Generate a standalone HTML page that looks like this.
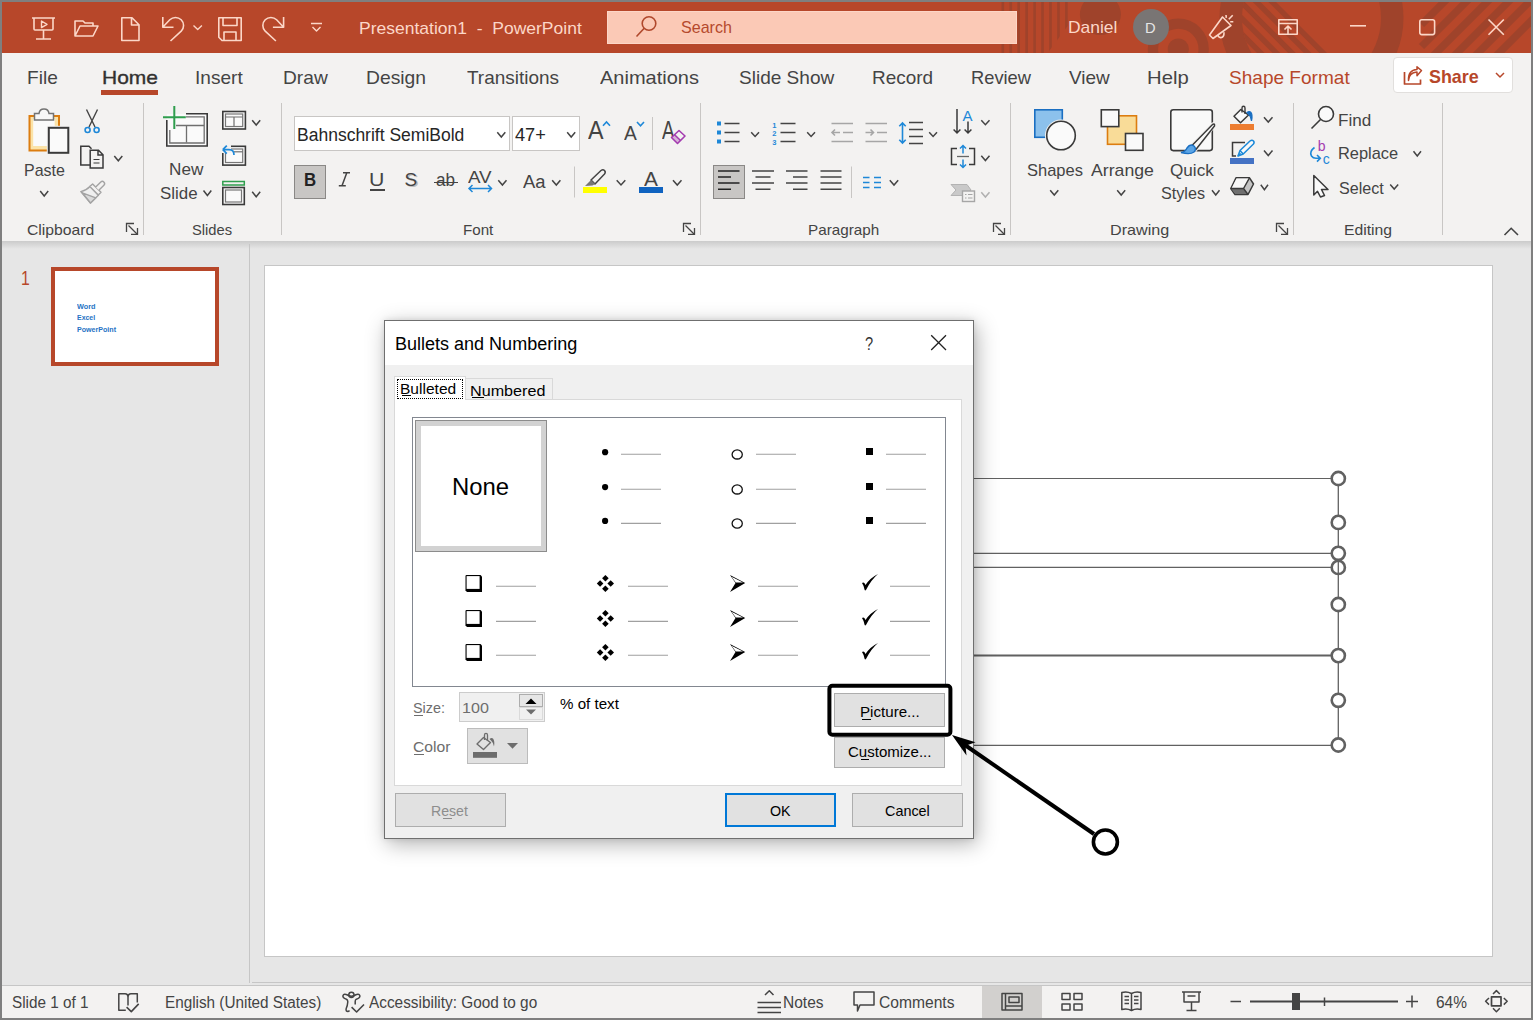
<!DOCTYPE html>
<html><head><meta charset="utf-8"><style>
html,body{margin:0;padding:0;}
body{width:1533px;height:1020px;overflow:hidden;background:#7f7f7f;font-family:"Liberation Sans", sans-serif;position:relative;}
.t{position:absolute;white-space:nowrap;}
.r{position:absolute;box-sizing:border-box;}
.s{position:absolute;overflow:visible;}
</style></head><body>
<div class="r" style="left:2px;top:2px;width:1529px;height:51px;background:#b7472a;"></div>
<div class="r" style="left:2px;top:53px;width:1529px;height:188px;background:#f3f2f1;"></div>
<div class="r" style="left:2px;top:241px;width:1529px;height:744px;background:#e6e6e6;"></div>
<div class="r" style="left:2px;top:241px;width:1529px;height:8px;background:linear-gradient(#cbcbcb,#e6e6e6);"></div>
<div class="r" style="left:2px;top:985px;width:1529px;height:1px;background:#c6c6c6;"></div>
<div class="r" style="left:2px;top:986px;width:1529px;height:32px;background:#f3f2f1;"></div>
<svg class="s" style="left:0px;top:0px" width="1533" height="1020" viewBox="0 0 1533 1020"><defs>
<clipPath id="tbclip"><rect x="2" y="2" width="1529" height="51"/></clipPath>
<clipPath id="stripeclip"><polygon points="990,2 1072,2 1072,20 1044,58 990,58"/></clipPath>
<clipPath id="ringin"><circle cx="1311.5" cy="18" r="69.5"/></clipPath>
</defs>
<g clip-path="url(#tbclip)" fill="#9f432b">
<g clip-path="url(#stripeclip)"><rect x="1001.50" y="2" width="2.6" height="56"/><rect x="1009.45" y="2" width="2.6" height="56"/><rect x="1017.40" y="2" width="2.6" height="56"/><rect x="1025.35" y="2" width="2.6" height="56"/><rect x="1033.30" y="2" width="2.6" height="56"/><rect x="1041.25" y="2" width="2.6" height="56"/><rect x="1049.20" y="2" width="2.6" height="56"/><rect x="1057.15" y="2" width="2.6" height="56"/><rect x="1065.10" y="2" width="2.6" height="56"/></g><circle cx="1100.4" cy="14.5" r="20.5"/><circle cx="1178.3" cy="49" r="30.5"/><circle cx="1178.3" cy="49" r="20.2" fill="#b7472a"/><circle cx="1178.3" cy="49" r="10.6"/><circle cx="1311.5" cy="18" r="92"/><circle cx="1311.5" cy="18" r="69.5" fill="#b7472a"/><g clip-path="url(#ringin)"><polygon points="1268.4,2 1276.0,2 1327.0,53 1319.4,53"/><polygon points="1252.8,2 1260.4,2 1311.4,53 1303.8,53"/><polygon points="1237.2,2 1244.8,2 1295.8,53 1288.2,53"/><polygon points="1221.6,2 1229.2,2 1280.2,53 1272.6,53"/><polygon points="1206.0,2 1213.6,2 1264.6,53 1257.0,53"/><polygon points="1190.4,2 1198.0,2 1249.0,53 1241.4,53"/><polygon points="1174.8,2 1182.4,2 1233.4,53 1225.8,53"/></g><path d="M1421.5 24.5 L1466 -20" stroke="#9f432b" stroke-width="7.4" fill="none"/><path d="M1421.5 46.5 L1488 -20" stroke="#9f432b" stroke-width="7.4" fill="none"/><path d="M1421.5 67.5 L1509 -20" stroke="#9f432b" stroke-width="7.4" fill="none"/><path d="M1421.5 88.5 L1530 -20" stroke="#9f432b" stroke-width="7.4" fill="none"/><path d="M1421.5 109.5 L1551 -20" stroke="#9f432b" stroke-width="7.4" fill="none"/><path d="M1421.5 130.5 L1572 -20" stroke="#9f432b" stroke-width="7.4" fill="none"/></g></svg>
<svg class="s" style="left:0px;top:0px" width="1533" height="1020" viewBox="0 0 1533 1020"><g fill="none" stroke="#fcd7c8" stroke-width="1.6" stroke-linejoin="round" stroke-linecap="butt"><path d="M32 18 H55 M34 18 V29 Q34 30 35 30 H52 Q53 30 53 29 V18 M43.5 30 V39 M36 39 H51"/><path d="M41.5 21 L47 24.3 L41.5 27.6 Z" stroke-width="1.4"/><path d="M75 36 V21 H83 L85 23 H93 V26 M75 36 L80 26 H98 L93 36 Z"/><path d="M121.8 17.8 H132 L139 24.8 V40.5 H121.8 Z M131.5 17.8 V25 H139"/><path d="M162.8 17 V27.2 H173.5 M163.2 26.8 L169.8 19.8 A8 8 0 0 1 181.2 31.2 L170.5 41"/><path d="M193.5 25.5 L197.7 29.5 L201.9 25.5" stroke-width="1.4"/><path d="M218.8 17.8 H241.2 V40.5 H222 L218.8 37.3 Z M223 17.8 V25.5 H237 V17.8 M224 40.5 V32 H236 V40.5"/><path d="M283.6 17 V27.2 H272.9 M283.2 26.8 L276.6 19.8 A8 8 0 0 0 265.2 31.2 L275.9 41"/><path d="M311 23.5 H322 M312.5 27 L316.5 31 L320.5 27" stroke-width="1.4"/><path d="M1209.5 35 L1222.5 17 L1231 25.5 L1213 38.5 Z M1217.8 34.5 Q1218.3 37.8 1220.8 37.6 Q1224.3 37.3 1224 32.2 M1226 15 L1226.3 17.8 M1228.8 19.2 L1232.7 15.3 M1230.2 21.8 H1233.3" /><path d="M1278.8 19.8 H1297.2 V34.2 H1278.8 Z M1278.8 23.5 H1297.2 M1288 33.5 V26.5 M1284.5 29.5 L1288 26 L1291.5 29.5"/><path d="M1350 25.8 H1366"/><rect x="1419.8" y="19.8" width="14.8" height="14.8" rx="2"/><path d="M1488.5 19.5 L1503.8 34.8 M1503.8 19.5 L1488.5 34.8"/></g></svg>
<div class="t" id="t0" style="left:358.97px;top:20.21px;font-size:17px;line-height:17px;color:#fcd7c8;transform:scaleX(1.0294);transform-origin:0 0;">Presentation1&nbsp; -&nbsp; PowerPoint</div>
<div class="r" style="left:607px;top:11px;width:410px;height:33px;background:#fbc9b6;border:1px solid #fdd6c7;"></div>
<svg class="s" style="left:0px;top:0px" width="1533" height="1020" viewBox="0 0 1533 1020"><g fill="none" stroke="#b0482c" stroke-width="1.6"><circle cx="649" cy="23.5" r="6.8"/><path d="M644.2 28.3 L636.5 36.5"/></g></svg>
<div class="t" id="t1" style="left:680.50px;top:19.41px;font-size:17px;line-height:17px;color:#b5492d;transform:scaleX(0.9455);transform-origin:0 0;">Search</div>
<div class="t" id="t2" style="left:1067.97px;top:19.41px;font-size:17px;line-height:17px;color:#fcd7c8;transform:scaleX(1.0255);transform-origin:0 0;">Daniel</div>
<svg class="s" style="left:0px;top:0px" width="1533" height="1020" viewBox="0 0 1533 1020"><circle cx="1151" cy="27" r="18" fill="#797574"/></svg>
<div class="t" id="t3" style="left:1144.82px;top:20.20px;font-size:15px;line-height:15px;color:#e6e6e6;transform:scaleX(0.9800);transform-origin:0 0;">D</div>
<div class="t" id="t4" style="left:26.79px;top:67.92px;font-size:19px;line-height:19px;color:#444444;transform:scaleX(1.0052);transform-origin:0 0;">File</div>
<div class="t" id="t5" style="left:101.90px;top:67.92px;font-size:19px;line-height:19px;color:#323130;transform:scaleX(1.1035);transform-origin:0 0;-webkit-text-stroke:0.35px #323130;">Home</div>
<div class="t" id="t6" style="left:195.00px;top:67.92px;font-size:19px;line-height:19px;color:#444444;transform:scaleX(1.0034);transform-origin:0 0;">Insert</div>
<div class="t" id="t7" style="left:282.99px;top:67.92px;font-size:19px;line-height:19px;color:#444444;transform:scaleX(1.0088);transform-origin:0 0;">Draw</div>
<div class="t" id="t8" style="left:365.59px;top:67.92px;font-size:19px;line-height:19px;color:#444444;transform:scaleX(1.0143);transform-origin:0 0;">Design</div>
<div class="t" id="t9" style="left:466.50px;top:67.92px;font-size:19px;line-height:19px;color:#444444;transform:scaleX(0.9976);transform-origin:0 0;">Transitions</div>
<div class="t" id="t10" style="left:599.60px;top:67.92px;font-size:19px;line-height:19px;color:#444444;transform:scaleX(1.0525);transform-origin:0 0;">Animations</div>
<div class="t" id="t11" style="left:738.50px;top:67.92px;font-size:19px;line-height:19px;color:#444444;transform:scaleX(1.0017);transform-origin:0 0;">Slide Show</div>
<div class="t" id="t12" style="left:872.00px;top:67.92px;font-size:19px;line-height:19px;color:#444444;transform:scaleX(0.9969);transform-origin:0 0;">Record</div>
<div class="t" id="t13" style="left:970.74px;top:67.92px;font-size:19px;line-height:19px;color:#444444;transform:scaleX(0.9630);transform-origin:0 0;">Review</div>
<div class="t" id="t14" style="left:1069.00px;top:67.92px;font-size:19px;line-height:19px;color:#444444;transform:scaleX(0.9971);transform-origin:0 0;">View</div>
<div class="t" id="t15" style="left:1147.43px;top:67.92px;font-size:19px;line-height:19px;color:#444444;transform:scaleX(1.0664);transform-origin:0 0;">Help</div>
<div class="t" id="t16" style="left:1229.40px;top:67.92px;font-size:19px;line-height:19px;color:#b7472a;transform:scaleX(1.0024);transform-origin:0 0;">Shape Format</div>
<div class="r" style="left:101px;top:90px;width:57px;height:5px;background:#b7472a;"></div>
<div class="r" style="left:1393px;top:57px;width:119.5px;height:36px;background:#ffffff;border:1px solid #e1dfdd;border-radius:4px;"></div>
<div class="t" id="t17" style="left:1428.80px;top:66.72px;font-size:19px;line-height:19px;color:#b7472a;transform:scaleX(0.9418);transform-origin:0 0;font-weight:700;">Share</div>
<svg class="s" style="left:0px;top:0px" width="1533" height="1020" viewBox="0 0 1533 1020"><g fill="none" stroke="#b7472a" stroke-width="1.7" stroke-linejoin="round"><path d="M1404.5 72 V84 H1420.5 V79.5"/><path d="M1408.5 80.5 Q1409 72.5 1417 72 V75.8 L1421.5 70.5 L1417 66.8 V69.5 Q1408 70 1408.5 80.5 Z" stroke-width="1.5"/><path d="M1496 73 L1500 77 L1504 73" stroke-width="1.5"/></g></svg>
<div class="r" style="left:143.0px;top:103px;width:1px;height:132px;background:#c8c6c4;"></div>
<div class="r" style="left:281.0px;top:103px;width:1px;height:132px;background:#c8c6c4;"></div>
<div class="r" style="left:700.0px;top:103px;width:1px;height:132px;background:#c8c6c4;"></div>
<div class="r" style="left:1010.0px;top:103px;width:1px;height:132px;background:#c8c6c4;"></div>
<div class="r" style="left:1293.0px;top:103px;width:1px;height:132px;background:#c8c6c4;"></div>
<div class="r" style="left:1442.0px;top:103px;width:1px;height:132px;background:#c8c6c4;"></div>
<div class="t" id="t18" style="left:26.50px;top:221.60px;font-size:15px;line-height:15px;color:#444444;transform:scaleX(1.0491);transform-origin:0 0;">Clipboard</div>
<div class="t" id="t19" style="left:192.40px;top:221.60px;font-size:15px;line-height:15px;color:#444444;transform:scaleX(0.9813);transform-origin:0 0;">Slides</div>
<div class="t" id="t20" style="left:462.79px;top:221.60px;font-size:15px;line-height:15px;color:#444444;transform:scaleX(1.0085);transform-origin:0 0;">Font</div>
<div class="t" id="t21" style="left:807.78px;top:221.60px;font-size:15px;line-height:15px;color:#444444;transform:scaleX(1.0159);transform-origin:0 0;">Paragraph</div>
<div class="t" id="t22" style="left:1109.72px;top:221.60px;font-size:15px;line-height:15px;color:#444444;transform:scaleX(1.0768);transform-origin:0 0;">Drawing</div>
<div class="t" id="t23" style="left:1343.65px;top:221.60px;font-size:15px;line-height:15px;color:#444444;transform:scaleX(1.0489);transform-origin:0 0;">Editing</div>
<div class="t" id="t24" style="left:24.36px;top:162.31px;font-size:17px;line-height:17px;color:#444444;transform:scaleX(0.9401);transform-origin:0 0;">Paste</div>
<div class="t" id="t25" style="left:168.79px;top:161.41px;font-size:17px;line-height:17px;color:#444444;transform:scaleX(1.0080);transform-origin:0 0;">New</div>
<div class="t" id="t26" style="left:159.80px;top:185.31px;font-size:17px;line-height:17px;color:#444444;transform:scaleX(0.9934);transform-origin:0 0;">Slide</div>
<div class="t" id="t27" style="left:1026.50px;top:161.61px;font-size:17px;line-height:17px;color:#444444;transform:scaleX(0.9710);transform-origin:0 0;">Shapes</div>
<div class="t" id="t28" style="left:1090.60px;top:161.61px;font-size:17px;line-height:17px;color:#444444;transform:scaleX(1.0396);transform-origin:0 0;">Arrange</div>
<div class="t" id="t29" style="left:1169.50px;top:161.61px;font-size:17px;line-height:17px;color:#444444;transform:scaleX(1.0079);transform-origin:0 0;">Quick</div>
<div class="t" id="t30" style="left:1160.50px;top:185.21px;font-size:17px;line-height:17px;color:#444444;transform:scaleX(0.9499);transform-origin:0 0;">Styles</div>
<div class="t" id="t31" style="left:1337.99px;top:111.61px;font-size:17px;line-height:17px;color:#444444;transform:scaleX(1.0058);transform-origin:0 0;">Find</div>
<div class="t" id="t32" style="left:1338.03px;top:145.41px;font-size:17px;line-height:17px;color:#444444;transform:scaleX(0.9652);transform-origin:0 0;">Replace</div>
<div class="t" id="t33" style="left:1338.80px;top:179.51px;font-size:17px;line-height:17px;color:#444444;transform:scaleX(0.9469);transform-origin:0 0;">Select</div>
<div class="r" style="left:294px;top:116px;width:216px;height:35px;background:#fff;border:1px solid #c8c6c4;"></div>
<div class="r" style="left:512px;top:116px;width:68px;height:35px;background:#fff;border:1px solid #c8c6c4;"></div>
<div class="t" id="t34" style="left:296.63px;top:125.76px;font-size:18px;line-height:18px;color:#262626;transform:scaleX(0.9725);transform-origin:0 0;">Bahnschrift SemiBold</div>
<div class="t" id="t35" style="left:515.30px;top:125.76px;font-size:18px;line-height:18px;color:#262626;transform:scaleX(1.0093);transform-origin:0 0;">47+</div>
<div class="r" style="left:294px;top:165px;width:32px;height:34px;background:#c8c6c4;border:1px solid #8a8886;"></div>
<div class="r" style="left:713px;top:165px;width:32px;height:34px;background:#c8c6c4;border:1px solid #8a8886;"></div>
<div class="t" id="t36" style="left:303.67px;top:170.76px;font-size:18px;line-height:18px;color:#222;transform:scaleX(0.9333);transform-origin:0 0;font-weight:700;">B</div>
<div class="t" id="t37" style="left:522.80px;top:173.26px;font-size:18px;line-height:18px;color:#444444;transform:scaleX(1.0215);transform-origin:0 0;">Aa</div>
<svg class="s" style="left:0px;top:0px" width="1533" height="1020" viewBox="0 0 1533 1020"><rect x="29.5" y="116" width="29.5" height="34.5" fill="#fbe3a8" stroke="#dc7d10" stroke-width="2"/><rect x="33.2" y="119" width="21.5" height="27" fill="#fafafa"/><path d="M34.5 120 V113.5 H39 Q39.5 109 44 109 Q48.5 109 49 113.5 H53.5 V120 Z" fill="#f7f7f7" stroke="#737373" stroke-width="1.5"/><rect x="46.8" y="125.8" width="23.5" height="29" fill="#f3f2f1"/><rect x="48.8" y="127.8" width="19.5" height="25" fill="#fafafa" stroke="#3a3a3a" stroke-width="2"/><path d="M40.2 191 L44.2 196 L48.2 191" fill="none" stroke="#444444" stroke-width="1.5"/><path d="M86.5 109.5 L95 127 M97.5 109.5 L89 127" stroke="#444444" stroke-width="1.4" fill="none"/><circle cx="87.6" cy="130" r="2.5" fill="none" stroke="#1e88d8" stroke-width="1.6"/><circle cx="96.6" cy="130" r="2.5" fill="none" stroke="#1e88d8" stroke-width="1.6"/><g fill="none" stroke="#3a3a3a" stroke-width="1.5" stroke-linejoin="miter"><path d="M90 165 H80.8 V146.2 H89 L91.5 148.7"/><path d="M90.2 150.2 H98.5 L103 154.7 V168 H90.2 Z M98 150.2 V155 H103"/><path d="M93.5 159.5 H99.5 M93.5 163 H99.5" stroke-width="1.2"/></g><path d="M114.3 156 L118.3 160.8 L122.3 156" fill="none" stroke="#444444" stroke-width="1.5"/><g stroke="#a3a3a3" stroke-width="1.4" stroke-linejoin="round"><path d="M90.2 186.3 Q86.5 190.3 80.8 191.6 L90.5 203 L98.4 195.3 Z" fill="#efefef"/><path d="M82.3 192.8 L95.8 197.8 L90.5 203 Z" fill="#dadada"/><path d="M89.8 186.6 L92.6 184 L101 192.3 L98.3 195.1 Z" fill="#f3f2f1"/><path d="M95.7 187 L100.8 182 Q102.4 180.6 104 182.2 Q105.4 183.8 103.9 185.3 L98.8 190.3" fill="#f3f2f1"/></g><g fill="none" stroke="#444444" stroke-width="1.3"><path d="M126.5 232 V223.5 H134"/><path d="M128.5 225.5 L137 234"/><path d="M131 234.3 H137.5 V228"/></g><rect x="167" y="114" width="40" height="32" fill="#fafafa"/><g fill="none" stroke="#3a3a3a" stroke-width="1.6"><path d="M186 113.8 H207.2 V146 H166.8 V120"/></g><g fill="none" stroke="#6f6f6f" stroke-width="1.3"><path d="M186 116.8 H204.2 V143 H169.8 V130"/><path d="M176 125.5 H204 M186.5 125.5 V142.5"/></g><path d="M163 117.3 H185.8 M174.3 106 V129" stroke="#2f9e4e" stroke-width="2"/><path d="M203.5 190.5 L207.4 195.5 L211.3 190.5" fill="none" stroke="#444444" stroke-width="1.5"/><g fill="none"><rect x="222.8" y="111.5" width="22.6" height="17.5" fill="#fafafa" stroke="#3a3a3a" stroke-width="1.6"/><rect x="225.5" y="114" width="17.2" height="12.5" stroke="#777" stroke-width="1.2"/><path d="M225.5 117 H242.7 M234 117 V126.5" stroke="#6f6f6f" stroke-width="1.2"/></g><path d="M252.2 120.2 L256.2 125 L260.2 120.2" fill="none" stroke="#444444" stroke-width="1.5"/><g fill="none"><rect x="222.8" y="146.3" width="22.6" height="18.8" fill="#fafafa" stroke="#3a3a3a" stroke-width="1.6"/><rect x="225.5" y="149" width="17.2" height="13.5" stroke="#777" stroke-width="1.2"/></g><rect x="221" y="144" width="10" height="9" fill="#f3f2f1"/><path d="M234 151.8 H242.7" stroke="#6f6f6f" stroke-width="1.2"/><path d="M222.8 149.7 L226.8 145.7 M222.8 149.7 L226.8 153.7 M222.8 149.7 H229 Q234 149.7 234 155" fill="none" stroke="#1e88d8" stroke-width="1.7"/><rect x="222.8" y="181.5" width="21.5" height="3.5" fill="#f3f2f1" stroke="#2f9e4e" stroke-width="1.5"/><g fill="none"><rect x="222.8" y="187.5" width="21.5" height="17" fill="#fafafa" stroke="#3a3a3a" stroke-width="1.6"/><rect x="225.5" y="190" width="16" height="12" stroke="#777" stroke-width="1.2"/></g><path d="M252.2 191.7 L256.2 196.7 L260.2 191.7" fill="none" stroke="#444444" stroke-width="1.5"/><path d="M497.3 132.3 L501.3 137 L505.3 132.3" fill="none" stroke="#444444" stroke-width="1.5"/><path d="M567.2 132.3 L571.2 137 L575.2 132.3" fill="none" stroke="#444444" stroke-width="1.5"/></svg>
<svg class="s" style="left:0px;top:0px" width="1533" height="1020" viewBox="0 0 1533 1020"><path d="M343 172.8 H350 M338.8 185.8 H345.8 M346.8 172.8 L342 185.8" fill="none" stroke="#444" stroke-width="1.5"/></svg>
<div class="t" id="t38" style="left:369.32px;top:170.76px;font-size:18px;line-height:18px;color:#444444;transform:scaleX(1.1818);transform-origin:0 0;">U</div>
<div class="r" style="left:370px;top:189px;width:14.5px;height:1.5px;background:#444444;"></div>
<div class="t" id="t39" style="left:406.00px;top:170.92px;font-size:19px;line-height:19px;color:#bdbdbd;transform:scaleX(1.0000);transform-origin:0 0;">S</div>
<div class="t" id="t40" style="left:404.50px;top:169.92px;font-size:19px;line-height:19px;color:#444444;transform:scaleX(1.0000);transform-origin:0 0;">S</div>
<div class="t" id="t41" style="left:436.00px;top:170.76px;font-size:18px;line-height:18px;color:#444444;transform:scaleX(0.9495);transform-origin:0 0;">ab</div>
<div class="r" style="left:433.5px;top:181.5px;width:24.5px;height:1.4px;background:#444444;"></div>
<div class="t" id="t42" style="left:468.00px;top:170.46px;font-size:16px;line-height:16px;color:#444444;transform:scaleX(1.1716);transform-origin:0 0;">AV</div>
<div class="t" id="t43" style="left:644.30px;top:168.22px;font-size:21px;line-height:21px;color:#444444;transform:scaleX(0.9929);transform-origin:0 0;">A</div>
<div class="t" id="t44" style="left:587.70px;top:117.29px;font-size:26px;line-height:26px;color:#444444;transform:scaleX(0.8944);transform-origin:0 0;">A</div>
<div class="t" id="t45" style="left:624.00px;top:121.52px;font-size:21px;line-height:21px;color:#444444;transform:scaleX(0.9143);transform-origin:0 0;">A</div>
<div class="t" id="t46" style="left:661.50px;top:117.29px;font-size:26px;line-height:26px;color:#444444;transform:scaleX(0.7222);transform-origin:0 0;clip-path:inset(0 0 0 0);">A</div>
<svg class="s" style="left:0px;top:0px" width="1533" height="1020" viewBox="0 0 1533 1020"><g fill="none" stroke="#1e88d8" stroke-width="1.5"><path d="M469 188.5 H491.5 M472.5 185 L469 188.5 L472.5 192 M488 185 L491.5 188.5 L488 192"/></g><path d="M498.3 180.2 L502.4 185 L506.5 180.2" fill="none" stroke="#444444" stroke-width="1.5"/><path d="M552.2 180.2 L556.3 185 L560.4 180.2" fill="none" stroke="#444444" stroke-width="1.5"/><path d="M574.5 166.5 V197.5" stroke="#c8c6c4" stroke-width="1"/><path d="M591 180 L601 170.5 Q603 169 604.5 170.5 Q606 172 604.5 174 L595 184 Z" fill="#f3f2f1" stroke="#444" stroke-width="1.5" stroke-linejoin="round"/><path d="M591 180 L595 184 L592.5 185.5 L585 186 Z" fill="#777"/><rect x="583" y="187" width="24" height="6" fill="#ffff00"/><path d="M616.7 180.2 L621.0 185 L625.3 180.2" fill="none" stroke="#444444" stroke-width="1.5"/><rect x="639" y="187" width="24" height="6" fill="#0f63c0"/><path d="M673 180.2 L677.25 185 L681.5 180.2" fill="none" stroke="#444444" stroke-width="1.5"/><path d="M603 125.8 L606.5 122 L610 125.8" fill="none" stroke="#1e88d8" stroke-width="1.6"/><path d="M637 122 L640.5 125.8 L644 122" fill="none" stroke="#1e88d8" stroke-width="1.6"/><path d="M652.5 117 V150" stroke="#c8c6c4" stroke-width="1"/><path d="M671.5 137.5 L679 130.5 L685 136 L677.5 143.5 Z" fill="#f3f2f1" stroke="#a43cb0" stroke-width="1.6" stroke-linejoin="round"/><path d="M674.5 134.8 L680.5 140.5" stroke="#a43cb0" stroke-width="1.4"/><path d="M671.5 137.5 L675 134 L680.5 139.5 L677.5 143.5 Z" fill="#a43cb0" opacity="0.35"/><g fill="none" stroke="#444444" stroke-width="1.3"><path d="M683.5 232 V223.5 H691"/><path d="M685.5 225.5 L694 234"/><path d="M688 234.3 H694.5 V228"/></g></svg>
<svg class="s" style="left:0px;top:0px" width="1533" height="1020" viewBox="0 0 1533 1020"><g stroke="#444444" stroke-width="1.6" fill="none"><path d="M724.5 123.5 H739.5 M724.5 132.5 H739.5 M724.5 141.5 H739.5"/><path d="M780.5 123.5 H795.5 M780.5 132.5 H795.5 M780.5 141.5 H795.5"/><path d="M909 122.5 H923 M909 129.5 H923 M909 136.5 H923 M909 143.5 H923"/></g><rect x="717" y="121.5" width="4" height="4" fill="#1e88d8"/><rect x="717" y="130.5" width="4" height="4" fill="#1e88d8"/><rect x="717" y="139.5" width="4" height="4" fill="#1e88d8"/><path d="M751.2 132.2 L755.1 136.5 L759 132.2" fill="none" stroke="#444444" stroke-width="1.5"/><path d="M807.2 132.2 L811.1 136.5 L815 132.2" fill="none" stroke="#444444" stroke-width="1.5"/><path d="M929.2 132.2 L933.1 136.5 L937 132.2" fill="none" stroke="#444444" stroke-width="1.5"/><text x="772.3" y="127.5" font-size="7.5" font-weight="700" fill="#1e88d8" font-family="Liberation Sans">1</text><text x="772.3" y="136.3" font-size="7.5" font-weight="700" fill="#1e88d8" font-family="Liberation Sans">2</text><text x="772.3" y="145" font-size="7.5" font-weight="700" fill="#1e88d8" font-family="Liberation Sans">3</text><g stroke="#a6a6a6" stroke-width="1.6" fill="none"><path d="M831.5 123.5 H853 M843 132.5 H853 M831.5 141.5 H853 M832.5 132.5 H840 M835 129.5 L832 132.5 L835 135.5"/><path d="M865.5 123.5 H887 M877 132.5 H887 M865.5 141.5 H887 M865.5 132.5 H873.5 M870.5 129.5 L873.5 132.5 L870.5 135.5"/></g><g stroke="#1e88d8" stroke-width="1.6" fill="none"><path d="M902.5 123 V143 M899.3 126.3 L902.5 123 L905.7 126.3 M899.3 139.7 L902.5 143 L905.7 139.7"/></g><path d="M957 109 V133 M953.6 129.5 L957 133 L960.4 129.5 M968 121.5 V133 M964.6 129.5 L968 133 L971.4 129.5" stroke="#3a3a3a" stroke-width="1.5" fill="none"/><text x="962.6" y="121.3" font-size="15" fill="#1e88d8" font-family="Liberation Sans">A</text><path d="M981.3 120.3 L985.4 124.7 L989.5 120.3" fill="none" stroke="#444444" stroke-width="1.5"/><path d="M957 148.5 H951.5 V164.5 H957 M969 148.5 H974.5 V164.5 H969" stroke="#3a3a3a" stroke-width="1.5" fill="none"/><path d="M957 156.5 H969" stroke="#666" stroke-width="1.3"/><path d="M963 145.5 V153.5 M960 148.5 L963 145.5 L966 148.5 M963 159.5 V167.5 M960 164.5 L963 167.5 L966 164.5" stroke="#1e88d8" stroke-width="1.5" fill="none"/><path d="M981.3 155.8 L985.4 160.5 L989.5 155.8" fill="none" stroke="#444444" stroke-width="1.5"/><path d="M951 184.5 H967 L971 190 L963 195.5 H951 L956 190 Z" fill="#c9c9c9" stroke="#b3b3b3" stroke-width="1"/><rect x="962.5" y="191" width="12" height="10.5" fill="#f3f2f1" stroke="#a6a6a6" stroke-width="1.4"/><path d="M965 194.5 H966.5 M968 194.5 H972.5 M965 198 H966.5 M968 198 H972.5" stroke="#a6a6a6" stroke-width="1.1"/><path d="M981.3 192.3 L985.4 197 L989.5 192.3" fill="none" stroke="#b0b0b0" stroke-width="1.5"/><g stroke="#222" stroke-width="1.6" fill="none"><path d="M718 171 H739.5 M718 177 H731 M718 183 H739.5 M718 189.3 H731"/></g><g stroke="#444444" stroke-width="1.6" fill="none"><path d="M752 171 H774 M755.5 177 H770.5 M752 183 H774 M755.5 189.3 H770.5"/><path d="M786 171 H807.5 M793 177 H807.5 M786 183 H807.5 M793 189.3 H807.5"/><path d="M820.5 171 H841.5 M820.5 177 H841.5 M820.5 183 H841.5 M820.5 189.3 H841.5"/></g><path d="M851.5 166.5 V198" stroke="#c8c6c4" stroke-width="1"/><g stroke="#1e88d8" stroke-width="1.6"><path d="M863 177.5 H869.5 M863 182.5 H869.5 M863 187.5 H869.5 M874 177.5 H881 M874 182.5 H881 M874 187.5 H881"/></g><path d="M889.8 180.2 L894.0 185 L898.2 180.2" fill="none" stroke="#444444" stroke-width="1.5"/><g fill="none" stroke="#444444" stroke-width="1.3"><path d="M993.5 232 V223.5 H1001"/><path d="M995.5 225.5 L1004 234"/><path d="M998 234.3 H1004.5 V228"/></g></svg>
<svg class="s" style="left:0px;top:0px" width="1533" height="1020" viewBox="0 0 1533 1020"><rect x="1034.8" y="109.8" width="27.5" height="27.5" fill="#8cc1ec" stroke="#1a6fc2" stroke-width="1.6"/><circle cx="1061" cy="135.5" r="14.3" fill="#f7f7f7" stroke="#f3f2f1" stroke-width="3.5"/><circle cx="1061" cy="135.5" r="14.3" fill="#fafafa" stroke="#3a3a3a" stroke-width="1.6"/><path d="M1050.2 190.3 L1054.25 195 L1058.3 190.3" fill="none" stroke="#444444" stroke-width="1.5"/><rect x="1107.5" y="115.8" width="29" height="28.5" fill="#f9dc98" stroke="#dc7d10" stroke-width="1.6"/><rect x="1101.3" y="109.8" width="17.5" height="16.8" fill="#f9f9f9" stroke="#3a3a3a" stroke-width="1.6"/><rect x="1125.5" y="133.5" width="17.5" height="16.8" fill="#f9f9f9" stroke="#3a3a3a" stroke-width="1.6"/><path d="M1117.2 190.3 L1121.2 195 L1125.2 190.3" fill="none" stroke="#444444" stroke-width="1.5"/><rect x="1170.8" y="109.8" width="41.5" height="40.8" rx="2.5" fill="#f9f9f9" stroke="#3a3a3a" stroke-width="1.6"/><path d="M1190 147 L1212.5 124 Q1215 122.5 1214.5 125.5 L1195 151" fill="#f9f9f9" stroke="#f3f2f1" stroke-width="3"/><path d="M1191 146.5 L1212.5 124.5 Q1215 123 1214.5 126 L1195.5 150" fill="#f9f9f9" stroke="#3a3a3a" stroke-width="1.5"/><path d="M1181 152.5 Q1185 152 1187 148 Q1190 143.5 1194 146 Q1197 149 1194 152 Q1190 155 1181 152.5 Z" fill="#5aa4e6" stroke="#1a6fc2" stroke-width="1.4"/><path d="M1212 190.3 L1215.75 195 L1219.5 190.3" fill="none" stroke="#444444" stroke-width="1.5"/><path d="M1234 116.3 L1240.8 109.5 L1248.5 115 L1240.5 122.8 Z" fill="#f9f9f9" stroke="#3a3a3a" stroke-width="1.5" stroke-linejoin="round"/><path d="M1242 112.5 V108 Q1242 106.3 1243.5 106.3 Q1245 106.3 1245 108 V114" fill="none" stroke="#3a3a3a" stroke-width="1.4"/><path d="M1247 112.5 Q1249 111 1250.5 112 Q1253 114.5 1251.5 120.8 Q1250.8 116 1248.5 114 Z" fill="#1a6fc2" stroke="#1a6fc2" stroke-width="1.2"/><rect x="1230" y="124" width="24" height="6" fill="#ed7d31"/><path d="M1264 117.2 L1268.25 122 L1272.5 117.2" fill="none" stroke="#444444" stroke-width="1.5"/><path d="M1245 142.5 H1232.5 V156 H1236" fill="none" stroke="#3a3a3a" stroke-width="1.5"/><path d="M1238 156 L1240 150.5 L1250 141 Q1252 139.5 1253.5 141 Q1254.8 142.5 1253.2 144.3 L1243.2 154 Z" fill="#f9f9f9" stroke="#1a88d8" stroke-width="1.5" stroke-linejoin="round"/><path d="M1240 150.5 L1243.2 154 M1238 156 L1240.5 153.3" fill="none" stroke="#1a88d8" stroke-width="1.5"/><rect x="1230" y="158" width="24" height="6" fill="#4472c4"/><path d="M1264 150.5 L1268.25 155.5 L1272.5 150.5" fill="none" stroke="#444444" stroke-width="1.5"/><path d="M1230.8 188.5 L1236 177.8 H1249.5 L1253.5 184 L1248 194.5 H1235 Z" fill="#c4c4c4" stroke="#3a3a3a" stroke-width="1.5" stroke-linejoin="round"/><path d="M1231.5 188.5 L1236.5 178.5 H1248.8 L1243.3 188.5 Z" fill="#f7f7f7"/><path d="M1231.3 189 H1243.3 L1247.5 194 H1235.3 Z" fill="#6f6f6f"/><path d="M1230.8 188.5 H1243.5 L1249.5 177.8 M1243.5 188.5 L1248 194.5" fill="none" stroke="#3a3a3a" stroke-width="1.4"/><path d="M1260.8 184.8 L1264.4 189.8 L1268 184.8" fill="none" stroke="#444444" stroke-width="1.5"/><g fill="none" stroke="#444444" stroke-width="1.3"><path d="M1276.5 232 V223.5 H1284"/><path d="M1278.5 225.5 L1287 234"/><path d="M1281 234.3 H1287.5 V228"/></g><circle cx="1326" cy="114" r="7.5" fill="#fafafa" stroke="#3a3a3a" stroke-width="1.6"/><path d="M1320.5 119.5 L1311.5 128.5" stroke="#3a3a3a" stroke-width="1.6"/><text x="1317.8" y="151" font-size="14" fill="#a43cb0" font-family="Liberation Sans">b</text><text x="1322.8" y="163.8" font-size="14" fill="#1e88d8" font-family="Liberation Sans">c</text><path d="M1314.5 147.5 Q1309 151.5 1311.5 156 Q1313 158.3 1316 158.3 H1320.5 M1317 155 L1320.3 158.3 L1317 161.6" fill="none" stroke="#1e88d8" stroke-width="1.6"/><path d="M1413.5 151.2 L1417.25 156 L1421 151.2" fill="none" stroke="#444444" stroke-width="1.5"/><path d="M1313.8 175.5 L1328 189.5 H1321.5 L1324.5 195.5 L1320.5 197 L1317.5 191.3 L1313.8 195 Z" fill="#fafafa" stroke="#3a3a3a" stroke-width="1.5" stroke-linejoin="round"/><path d="M1390.2 184.5 L1394.2 189 L1398.2 184.5" fill="none" stroke="#444444" stroke-width="1.5"/><path d="M1504.5 235 L1511.2 228.3 L1518 235" fill="none" stroke="#444444" stroke-width="1.6"/></svg>
<div class="r" style="left:249px;top:244px;width:1px;height:739px;background:#c6c6c6;"></div>
<div class="r" style="left:252px;top:982px;width:1279px;height:1px;background:#c6c6c6;"></div>
<div class="t" id="t47" style="left:21.15px;top:267.02px;font-size:21px;line-height:21px;color:#b7472a;transform:scaleX(0.7500);transform-origin:0 0;">1</div>
<div class="r" style="left:51px;top:267px;width:168px;height:99px;background:#fff;border:4px solid #b7472a;"></div>
<div class="t" id="t48" style="left:77.30px;top:302.77px;font-size:7px;line-height:7px;color:#2672c4;transform:scaleX(1.0412);transform-origin:0 0;font-weight:700;">Word</div>
<div class="t" id="t49" style="left:77.30px;top:314.07px;font-size:7px;line-height:7px;color:#2672c4;transform:scaleX(0.9919);transform-origin:0 0;font-weight:700;">Excel</div>
<div class="t" id="t50" style="left:77.30px;top:326.07px;font-size:7px;line-height:7px;color:#2672c4;transform:scaleX(1.0135);transform-origin:0 0;font-weight:700;">PowerPoint</div>
<div class="r" style="left:264px;top:265px;width:1229px;height:692px;background:#fff;border:1px solid #c6c6c6;"></div>
<svg class="s" style="left:0px;top:0px" width="1533" height="1020" viewBox="0 0 1533 1020"><g stroke="#616161"><path d="M960 478.5 H1332" stroke-width="1.2" fill="none"/><path d="M960 553.3 H1332" stroke-width="1.2" fill="none"/><path d="M960 567.4 H1332" stroke-width="1.2" fill="none"/><path d="M960 655.6 H1332" stroke-width="2" fill="none"/><path d="M960 745.3 H1332" stroke-width="1.2" fill="none"/><path d="M1338.3 478.5 V745" stroke-width="1.3" fill="none"/><circle cx="1338.3" cy="478.5" r="6.6" fill="#fff" stroke-width="2.6"/><circle cx="1338.3" cy="522.4" r="6.6" fill="#fff" stroke-width="2.6"/><circle cx="1338.3" cy="553.3" r="6.6" fill="#fff" stroke-width="2.6"/><circle cx="1338.3" cy="567.4" r="6.6" fill="none" stroke-width="2.6"/><circle cx="1338.3" cy="604.5" r="6.6" fill="#fff" stroke-width="2.6"/><circle cx="1338.3" cy="655.6" r="6.6" fill="#fff" stroke-width="2.6"/><circle cx="1338.3" cy="700.3" r="6.6" fill="#fff" stroke-width="2.6"/><circle cx="1338.3" cy="745" r="6.6" fill="#fff" stroke-width="2.6"/></g></svg>
<div class="t" id="t51" style="left:12.20px;top:995.26px;font-size:16px;line-height:16px;color:#444444;transform:scaleX(0.9556);transform-origin:0 0;">Slide 1 of 1</div>
<div class="t" id="t52" style="left:164.65px;top:995.26px;font-size:16px;line-height:16px;color:#444444;transform:scaleX(0.9550);transform-origin:0 0;">English (United States)</div>
<div class="t" id="t53" style="left:369.30px;top:995.46px;font-size:16px;line-height:16px;color:#444444;transform:scaleX(0.9601);transform-origin:0 0;">Accessibility: Good to go</div>
<div class="t" id="t54" style="left:783.43px;top:995.26px;font-size:16px;line-height:16px;color:#444444;transform:scaleX(0.9707);transform-origin:0 0;">Notes</div>
<div class="t" id="t55" style="left:879.00px;top:995.26px;font-size:16px;line-height:16px;color:#444444;transform:scaleX(0.9761);transform-origin:0 0;">Comments</div>
<div class="t" id="t56" style="left:1436.00px;top:995.46px;font-size:16px;line-height:16px;color:#444444;transform:scaleX(0.9655);transform-origin:0 0;">64%</div>
<div class="r" style="left:982px;top:986px;width:60px;height:32px;background:#d2d0ce;"></div>
<svg class="s" style="left:0px;top:0px" width="1533" height="1020" viewBox="0 0 1533 1020"><g fill="none" stroke="#444444" stroke-width="1.5" stroke-linejoin="round"><path d="M125.8 1010.2 H118.8 V993.8 H125 Q128 993.8 128 997.5 V1005.5 M128 997.5 Q128 993.8 131 993.8 H137.3 V1002.5"/><path d="M126.6 1007.2 L131.3 1011.6 L138.7 1003.9" stroke-width="1.6"/><circle cx="351.4" cy="994.8" r="2.6"/><path d="M346.5 999.2 Q342.3 998 343 995.5 Q344 993.3 347.5 995 Q351.4 997.5 355.3 995 Q358.8 993.3 359.8 995.5 Q360.5 998 356.3 999.2 Q355.2 999.8 355.2 1001.5 V1004.5 M346.5 999.2 Q347.8 999.8 347.8 1001.8 Q347.5 1006 346.2 1008.5 Q345.5 1011.5 348 1011.5 Q349 1011.3 349.5 1010.5"/><path d="M351.6 1007.2 L356.6 1012 L364 1004.5" stroke-width="1.6"/><path d="M757.5 1002.5 H781 M757.5 1007.5 H781 M757.5 1012.5 H781 M765 995 L769.3 990.8 L773.5 995"/><path d="M854 992 H874 V1005 H860 L857.5 1011 V1005 H854 Z"/><rect x="1002" y="993.5" width="20" height="16.5"/><path d="M1005.5 993.5 V1010 M1009 997 H1019 V1002.5 H1009 Z M1005.5 1006 H1022"/><rect x="1062" y="993.5" width="8" height="6"/><rect x="1074" y="993.5" width="8" height="6"/><rect x="1062" y="1004" width="8" height="6"/><rect x="1074" y="1004" width="8" height="6"/><path d="M1121.8 992.5 Q1127 991 1131.5 993.5 Q1136 991 1141 992.5 V1009.5 Q1136 1008 1131.5 1010.5 Q1127 1008 1121.8 1009.5 Z M1131.5 993.5 V1010.5 M1124.5 996.5 H1129 M1124.5 1000 H1129 M1124.5 1003.5 H1129 M1134 996.5 H1138.5 M1134 1000 H1138.5 M1134 1003.5 H1138.5"/><path d="M1182 992 H1201 M1184 992 V1002 H1199 V992 M1191.5 1002 V1010 M1186.5 1010.5 H1196.5 M1187.5 996 H1195.5"/><path d="M1230.5 1001.5 H1241 M1406 1001.5 H1418 M1412 995.5 V1007.5"/><path d="M1250 1001.5 H1398" stroke-width="2"/><path d="M1324.5 997.5 V1006" stroke-width="1.5"/><path d="M1493 994 L1496.4 990.6 L1499.8 994 M1493 1008.3 L1496.4 1011.7 L1499.8 1008.3 M1489 998 L1485.6 1001.3 L1489 1004.6 M1503.8 998 L1507.2 1001.3 L1503.8 1004.6"/><rect x="1491.5" y="996.8" width="9.5" height="9" stroke-width="1.7"/></g><rect x="1292" y="993" width="8" height="17" fill="#444444"/></svg>
<div class="r" style="left:384px;top:320px;width:590px;height:519px;background:#f0f0f0;border:1px solid #6f6f6f;box-shadow:3px 5px 20px rgba(0,0,0,0.30), 0 0 6px rgba(0,0,0,0.10);"></div>
<div class="r" style="left:385px;top:321px;width:588px;height:44px;background:#ffffff;"></div>
<div class="t" id="t57" style="left:395.30px;top:335.26px;font-size:18px;line-height:18px;color:#000;transform:scaleX(1.0006);transform-origin:0 0;">Bullets and Numbering</div>
<div class="t" id="t58" style="left:864.70px;top:333.92px;font-size:19px;line-height:19px;color:#333;transform:scaleX(0.7700);transform-origin:0 0;">?</div>
<svg class="s" style="left:0px;top:0px" width="1533" height="1020" viewBox="0 0 1533 1020"><path d="M931.2 335.2 L946 350 M946 335.2 L931.2 350" stroke="#222" stroke-width="1.3" fill="none"/></svg>
<div class="r" style="left:465px;top:378px;width:88px;height:22px;background:#f0f0f0;border:1px solid #d9d9d9;border-bottom:none;"></div>
<div class="r" style="left:394px;top:399px;width:568px;height:387px;background:#ffffff;border:1px solid #d9d9d9;"></div>
<div class="r" style="left:394px;top:376px;width:72px;height:24px;background:#ffffff;border:1px solid #d9d9d9;border-bottom:none;"></div>
<div class="r" style="left:397px;top:379px;width:66px;height:20px;border:1px dotted #000;"></div>
<div class="t" id="t59" style="left:400.46px;top:380.90px;font-size:15px;line-height:15px;color:#000;transform:scaleX(1.0366);transform-origin:0 0;">Bulleted</div>
<div class="r" style="left:402px;top:395px;width:9px;height:1px;background:#000;"></div>
<div class="t" id="t60" style="left:470.42px;top:383.10px;font-size:15px;line-height:15px;color:#000;transform:scaleX(1.0773);transform-origin:0 0;">Numbered</div>
<div class="r" style="left:472px;top:397px;width:12px;height:1.3px;background:#000;"></div>
<div class="r" style="left:412px;top:417px;width:534px;height:270px;background:#fff;border:1px solid #828790;"></div>
<div class="r" style="left:415px;top:420px;width:132px;height:132px;background:#fff;border:1px solid #8c8c8c;box-shadow:inset 0 0 0 5px #d2d2d2;"></div>
<div class="t" id="t61" style="left:452.01px;top:474.88px;font-size:24px;line-height:24px;color:#000;transform:scaleX(0.9942);transform-origin:0 0;">None</div>
<svg class="s" style="left:0px;top:0px" width="1533" height="1020" viewBox="0 0 1533 1020"><g stroke="#a0a0a0" stroke-width="1.1"><path d="M621 454.3 H661 M756 454.3 H796 M886 454.3 H926"/><path d="M621 489.3 H661 M756 489.3 H796 M886 489.3 H926"/><path d="M621 523.4 H661 M756 523.4 H796 M886 523.4 H926"/><path d="M496 586.3 H536 M628 586.3 H668 M758 586.3 H798 M890 586.3 H930"/><path d="M496 621.4 H536 M628 621.4 H668 M758 621.4 H798 M890 621.4 H930"/><path d="M496 655.2 H536 M628 655.2 H668 M758 655.2 H798 M890 655.2 H930"/></g><circle cx="605.1" cy="452.2" r="3.1" fill="#000"/><circle cx="605.1" cy="487.1" r="3.1" fill="#000"/><circle cx="605.1" cy="520.9" r="3.1" fill="#000"/><ellipse cx="737.2" cy="454.4" rx="5.1" ry="4.6" fill="none" stroke="#111" stroke-width="1.3"/><ellipse cx="737.2" cy="489.4" rx="5.1" ry="4.6" fill="none" stroke="#111" stroke-width="1.3"/><ellipse cx="737.2" cy="523.5" rx="5.1" ry="4.6" fill="none" stroke="#111" stroke-width="1.3"/><rect x="866" y="448" width="7" height="7" fill="#000"/><rect x="866" y="483" width="7" height="7" fill="#000"/><rect x="866" y="517" width="7" height="7" fill="#000"/><path d="M465.5 576 Q465.5 575 466.5 575 H480.5 L482 576.5 V592 H467 L465.5 590.5 Z" fill="#000"/><rect x="466.6" y="576.1" width="13" height="12.8" fill="#fff"/><path d="M605.4 574.9000000000001 L608.6999999999999 578.2 L605.4 581.5 L602.1 578.2 Z" fill="#000"/><path d="M605.4 585.5 L608.6999999999999 588.8 L605.4 592.0999999999999 L602.1 588.8 Z" fill="#000"/><path d="M600.1 580.2 L603.4 583.5 L600.1 586.8 L596.8000000000001 583.5 Z" fill="#000"/><path d="M610.6999999999999 580.2 L613.9999999999999 583.5 L610.6999999999999 586.8 L607.4 583.5 Z" fill="#000"/><path d="M730 575 L745.2 583 L730 592 L735.5 583 Z" fill="#000"/><path d="M731.5 576.8 L743 582.6 L735.8 582.6 Z" fill="#fff"/><path d="M862 583 Q864 581.5 865.5 585 Q870 578 878 574 Q871 580 866 590 Q865 591 864.5 589.5 Q864 586 862 583 Z" fill="#000"/><path d="M465.5 611 Q465.5 610 466.5 610 H480.5 L482 611.5 V627 H467 L465.5 625.5 Z" fill="#000"/><rect x="466.6" y="611.1" width="13" height="12.8" fill="#fff"/><path d="M605.4 609.9000000000001 L608.6999999999999 613.2 L605.4 616.5 L602.1 613.2 Z" fill="#000"/><path d="M605.4 620.5 L608.6999999999999 623.8 L605.4 627.0999999999999 L602.1 623.8 Z" fill="#000"/><path d="M600.1 615.2 L603.4 618.5 L600.1 621.8 L596.8000000000001 618.5 Z" fill="#000"/><path d="M610.6999999999999 615.2 L613.9999999999999 618.5 L610.6999999999999 621.8 L607.4 618.5 Z" fill="#000"/><path d="M730 610 L745.2 618 L730 627 L735.5 618 Z" fill="#000"/><path d="M731.5 611.8 L743 617.6 L735.8 617.6 Z" fill="#fff"/><path d="M862 618 Q864 616.5 865.5 620 Q870 613 878 609 Q871 615 866 625 Q865 626 864.5 624.5 Q864 621 862 618 Z" fill="#000"/><path d="M465.5 645 Q465.5 644 466.5 644 H480.5 L482 645.5 V661 H467 L465.5 659.5 Z" fill="#000"/><rect x="466.6" y="645.1" width="13" height="12.8" fill="#fff"/><path d="M605.4 643.9000000000001 L608.6999999999999 647.2 L605.4 650.5 L602.1 647.2 Z" fill="#000"/><path d="M605.4 654.5 L608.6999999999999 657.8 L605.4 661.0999999999999 L602.1 657.8 Z" fill="#000"/><path d="M600.1 649.2 L603.4 652.5 L600.1 655.8 L596.8000000000001 652.5 Z" fill="#000"/><path d="M610.6999999999999 649.2 L613.9999999999999 652.5 L610.6999999999999 655.8 L607.4 652.5 Z" fill="#000"/><path d="M730 644 L745.2 652 L730 661 L735.5 652 Z" fill="#000"/><path d="M731.5 645.8 L743 651.6 L735.8 651.6 Z" fill="#fff"/><path d="M862 652 Q864 650.5 865.5 654 Q870 647 878 643 Q871 649 866 659 Q865 660 864.5 658.5 Q864 655 862 652 Z" fill="#000"/></svg>
<div class="t" id="t62" style="left:413.30px;top:700.30px;font-size:15px;line-height:15px;color:#6d6d6d;transform:scaleX(0.9602);transform-origin:0 0;">Size:</div>
<div class="r" style="left:414px;top:714.8px;width:8.5px;height:1px;background:#6d6d6d;"></div>
<div class="r" style="left:459px;top:692px;width:86px;height:30px;background:#f0f0f0;border:1px solid #cccccc;"></div>
<div class="t" id="t63" style="left:462.23px;top:700.30px;font-size:15px;line-height:15px;color:#6d6d6d;transform:scaleX(1.0724);transform-origin:0 0;">100</div>
<div class="r" style="left:519px;top:694px;width:24px;height:13px;background:#e6e6e6;border:1px solid #adadad;"></div>
<div class="r" style="left:519px;top:707px;width:24px;height:13px;background:#f0f0f0;border:1px solid #dadada;"></div>
<svg class="s" style="left:0px;top:0px" width="1533" height="1020" viewBox="0 0 1533 1020"><path d="M525.5 704 L531 698.5 L536.5 704 Z" fill="#000"/><path d="M526 709.5 L531 714.5 L536 709.5 Z" fill="#6d6d6d"/></svg>
<div class="t" id="t64" style="left:560.00px;top:696.10px;font-size:15px;line-height:15px;color:#000;transform:scaleX(1.0086);transform-origin:0 0;">% of text</div>
<div class="t" id="t65" style="left:413.30px;top:739.30px;font-size:15px;line-height:15px;color:#6d6d6d;transform:scaleX(1.0460);transform-origin:0 0;">Color</div>
<div class="r" style="left:414px;top:754px;width:9.5px;height:1px;background:#6d6d6d;"></div>
<div class="r" style="left:467px;top:728px;width:61px;height:36px;background:#e1e1e1;border:1px solid #bcbcbc;"></div>
<svg class="s" style="left:0px;top:0px" width="1533" height="1020" viewBox="0 0 1533 1020"><path d="M477 744 L483.5 737.5 L490.5 742.5 L483.5 749.5 Z" fill="none" stroke="#6d6d6d" stroke-width="1.4" stroke-linejoin="round"/><path d="M484.5 740 V735 Q484.5 733.3 486 733.3 Q487.5 733.3 487.5 735 V741" fill="none" stroke="#6d6d6d" stroke-width="1.3"/><path d="M489.5 739 Q491.5 737.5 493 738.5 Q495 741 494 746.5 Q493.3 742.5 491 740.5 Z" fill="#6d6d6d"/><rect x="473" y="752" width="24" height="5.8" fill="#6d6d6d"/><path d="M507 743 H518 L512.5 748.8 Z" fill="#6d6d6d"/></svg>
<div class="r" style="left:834px;top:693px;width:111px;height:34px;background:#e1e1e1;border:1px solid #adadad;"></div>
<div class="r" style="left:834px;top:737px;width:111px;height:31px;background:#e1e1e1;border:1px solid #adadad;"></div>
<div class="r" style="left:395px;top:793px;width:111px;height:34px;background:#e1e1e1;border:1px solid #adadad;"></div>
<div class="r" style="left:852px;top:793px;width:111px;height:34px;background:#e1e1e1;border:1px solid #adadad;"></div>
<div class="r" style="left:725px;top:793px;width:111px;height:34px;background:#e1e1e1;border:2px solid #0078d7;"></div>
<div class="t" id="t66" style="left:859.99px;top:704.30px;font-size:15px;line-height:15px;color:#000;transform:scaleX(1.0084);transform-origin:0 0;">Picture...</div>
<div class="r" style="left:862px;top:719px;width:8.5px;height:1px;background:#000;"></div>
<div class="t" id="t67" style="left:848.00px;top:744.30px;font-size:15px;line-height:15px;color:#000;transform:scaleX(1.0013);transform-origin:0 0;">Customize...</div>
<div class="r" style="left:860.5px;top:759px;width:8.5px;height:1px;background:#000;"></div>
<div class="t" id="t68" style="left:431.06px;top:803.10px;font-size:15px;line-height:15px;color:#8d8d8d;transform:scaleX(0.9406);transform-origin:0 0;">Reset</div>
<div class="r" style="left:443px;top:818px;width:8.5px;height:1px;background:#8d8d8d;"></div>
<div class="t" id="t69" style="left:770.00px;top:803.30px;font-size:15px;line-height:15px;color:#000;transform:scaleX(0.9507);transform-origin:0 0;">OK</div>
<div class="t" id="t70" style="left:884.70px;top:803.20px;font-size:15px;line-height:15px;color:#000;transform:scaleX(0.9599);transform-origin:0 0;">Cancel</div>
<svg class="s" style="left:0px;top:0px" width="1533" height="1020" viewBox="0 0 1533 1020"><g fill="none" stroke="#000"><rect x="829.4" y="685.8" width="121" height="49" rx="3" stroke-width="4"/><path d="M1094 834 L962 743" stroke-width="4"/><circle cx="1105.4" cy="842" r="12" stroke-width="3.6"/></g><path d="M952 735 L975.5 742.3 L965.5 745.8 L966.5 755.5 Z" fill="#000"/></svg>
</body></html>
